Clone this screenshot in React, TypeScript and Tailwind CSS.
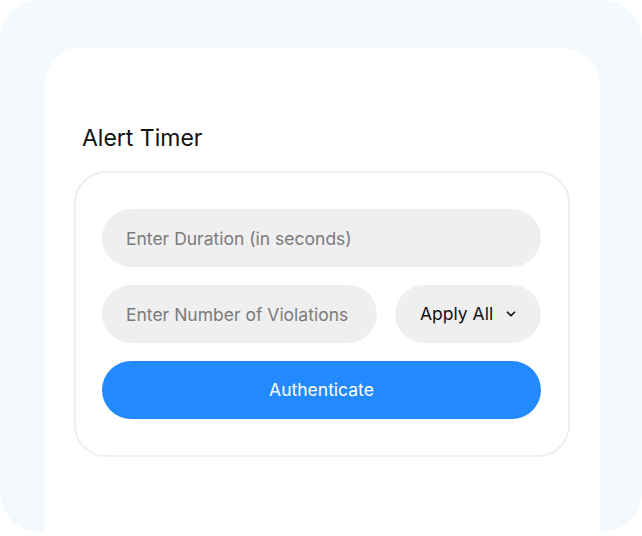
import { ChevronDown } from "lucide-react";

export default function App() {
  return (
    <main className="w-[642px] h-[536px] bg-white font-['Inter',sans-serif]">
      {/* Outer tinted frame */}
      <div className="h-[532px] rounded-[40px] bg-[#f4f9fe] pl-[44px] pr-[42px] pt-[48px] overflow-hidden">
        <div className="h-full rounded-t-[38px] bg-white px-[30px] pt-[75px]">
          <h1 className="ml-[8px] text-[23px] leading-[30px] text-[#111111]">Alert Timer</h1>

          <div className="mt-[18px] rounded-[32px] border-2 border-[#efefef] pl-[26px] pr-[27px] py-[36px] flex flex-col gap-[18px]">
            <input
              placeholder="Enter Duration (in seconds)"
              className="h-[58px] w-full rounded-full bg-[#efefef] px-[24px] text-[17.5px] text-[#111] placeholder:text-[#7b7b7b] outline-none"
            />

            <div className="flex gap-[18px]">
              <input
                placeholder="Enter Number of Violations"
                className="h-[58px] w-[275px] rounded-full bg-[#efefef] px-[24px] text-[17.5px] text-[#111] placeholder:text-[#7b7b7b] outline-none"
              />
              <button className="h-[58px] flex-1 rounded-full bg-[#efefef] pl-[25px] pr-[23px] flex items-center justify-between text-[17.5px] text-[#111]">
                <span>Apply All</span>
                <ChevronDown size={14} strokeWidth={3} />
              </button>
            </div>

            <button className="h-[58px] w-full rounded-full bg-[#2389ff] text-[17.5px] text-white">
              Authenticate
            </button>
          </div>
        </div>
      </div>
    </main>
  );
}
